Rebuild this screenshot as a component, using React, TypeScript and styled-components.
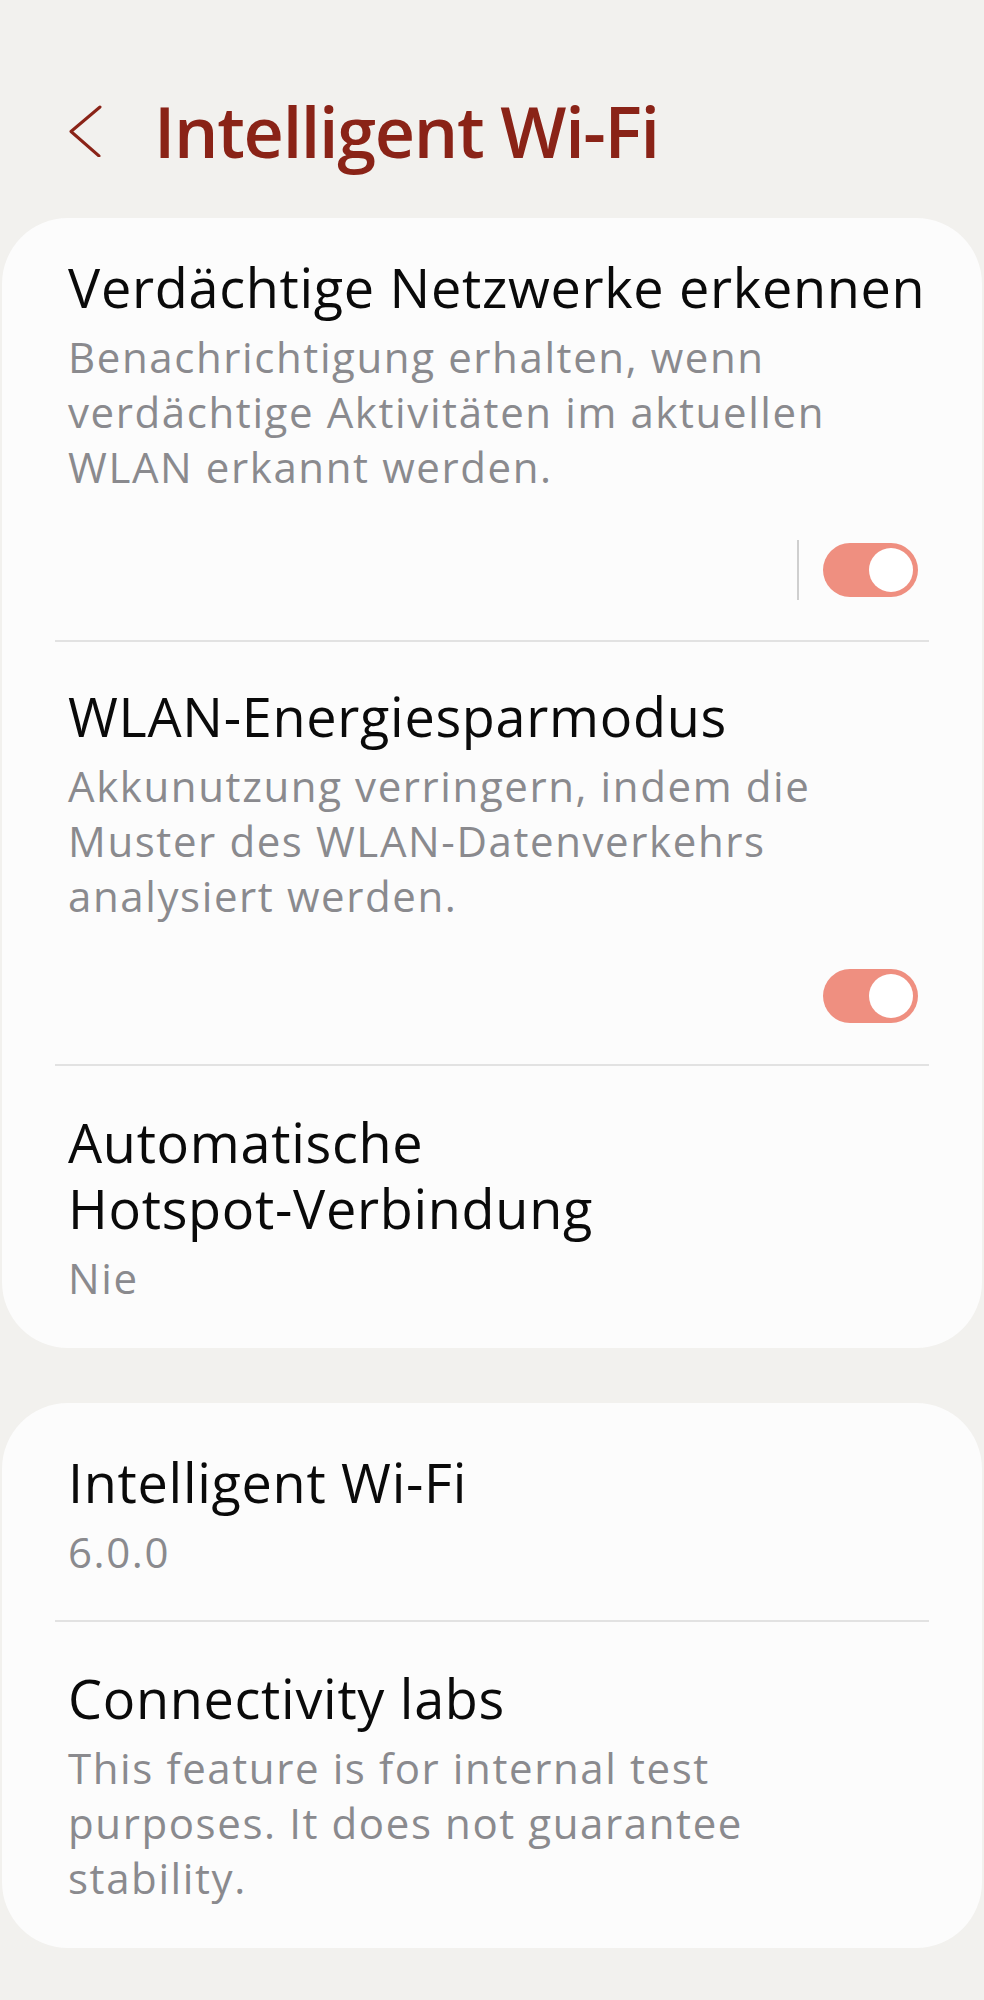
import React from 'react';
import styled, { createGlobalStyle } from 'styled-components';

const GlobalStyle = createGlobalStyle`
  html, body {
    margin: 0;
    padding: 0;
    background-color: #f2f1ee;
  }
  body {
    font-family: "Open Sans", "Noto Sans", sans-serif;
  }
`;

// word joiner keeps "Hotspot-Verbindung" together like the device does
const WJ = '\u2060';

const Page = styled.div`
  display: flex;
  flex-direction: column;
  min-height: 2000px;
  background-color: #f2f1ee;
  padding-top: 86px;
  box-sizing: border-box;
`;

const Header = styled.div`
  display: flex;
  align-items: center;
  padding-left: 69px;
  gap: 52px;
  margin-bottom: 42px;
  height: 90px;
`;

const BackIcon = styled.svg`
  width: 33px;
  height: 52px;
  flex-shrink: 0;
`;

const HeaderTitle = styled.h1`
  margin: 0;
  font-size: 70px;
  line-height: 90px;
  font-weight: 600;
  color: #8a2317;
  letter-spacing: -1.3px;
`;

const Card = styled.div`
  margin: 0 2px 55px;
  background-color: #fcfcfc;
  border-radius: 66px;
  display: flex;
  flex-direction: column;
`;

const Item = styled.div<{ $top: number; $bottom: number }>`
  display: flex;
  flex-direction: column;
  padding: ${p => p.$top}px 64px ${p => p.$bottom}px 66px;
`;

const Title = styled.div`
  font-size: 54px;
  line-height: 66px;
  color: #0a0a0a;
  letter-spacing: 0.7px;
  margin-right: -30px;
`;

const Summary = styled.div`
  font-size: 42px;
  line-height: 55px;
  color: #8a8a8e;
  letter-spacing: 1.6px;
  margin-top: 9px;
  margin-right: 50px;
`;

const SwitchRow = styled.div`
  display: flex;
  justify-content: flex-end;
  align-items: center;
  gap: 24px;
  margin-top: 46px;
`;

const VerticalRule = styled.div`
  width: 2px;
  height: 60px;
  background-color: #cfcfcf;
`;

const Track = styled.div<{ $on: boolean }>`
  width: 95px;
  height: 54px;
  border-radius: 27px;
  background-color: ${p => (p.$on ? '#ef8f80' : '#cfcfcf')};
  display: flex;
  align-items: center;
  justify-content: ${p => (p.$on ? 'flex-end' : 'flex-start')};
  padding: 0 5px;
  box-sizing: border-box;
`;

const Knob = styled.div`
  width: 44px;
  height: 44px;
  border-radius: 50%;
  background-color: #ffffff;
`;

const Divider = styled.div`
  height: 2px;
  margin: 0 53px;
  background-color: #e2e2e2;
`;

const Switch: React.FC<{ on: boolean; rule?: boolean }> = ({ on, rule }) => (
  <SwitchRow>
    {rule && <VerticalRule />}
    <Track $on={on}>
      <Knob />
    </Track>
  </SwitchRow>
);

export default function App() {
  return (
    <Page>
      <GlobalStyle />
      <Header>
        <BackIcon viewBox="0 0 33 52" fill="none">
          <polyline
            points="31,2 2,26.5 30,51"
            stroke="#8a2317"
            strokeWidth="3"
            strokeLinecap="round"
            strokeLinejoin="round"
          />
        </BackIcon>
        <HeaderTitle>Intelligent Wi-Fi</HeaderTitle>
      </Header>

      <Card>
        <Item $top={36} $bottom={40}>
          <Title>Verdächtige Netzwerke erkennen</Title>
          <Summary>
            Benachrichtigung erhalten, wenn verdächtige Aktivitäten im aktuellen WLAN erkannt werden.
          </Summary>
          <Switch on rule />
        </Item>
        <Divider />
        <Item $top={41} $bottom={41}>
          <Title>WLAN-Energiesparmodus</Title>
          <Summary>
            {`Akkunutzung verringern, indem die Muster des WLAN-${WJ}Datenverkehrs analysiert werden.`}
          </Summary>
          <Switch on />
        </Item>
        <Divider />
        <Item $top={43} $bottom={43}>
          <Title>{`Automatische Hotspot-${WJ}Verbindung`}</Title>
          <Summary>Nie</Summary>
        </Item>
      </Card>

      <Card>
        <Item $top={46} $bottom={41}>
          <Title>Intelligent Wi-Fi</Title>
          <Summary>6.0.0</Summary>
        </Item>
        <Divider />
        <Item $top={43} $bottom={43}>
          <Title>Connectivity labs</Title>
          <Summary>
            This feature is for internal test purposes. It does not guarantee stability.
          </Summary>
        </Item>
      </Card>
    </Page>
  );
}
